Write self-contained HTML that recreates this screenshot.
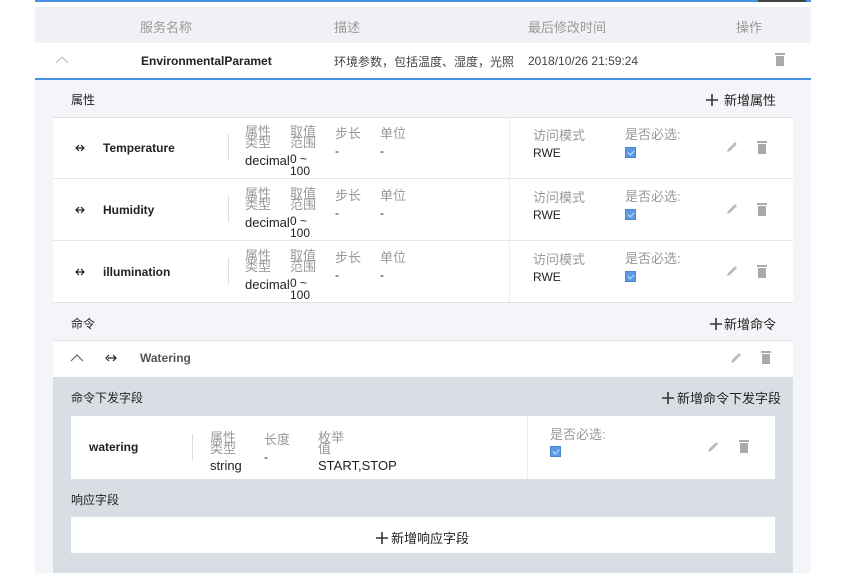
<!DOCTYPE html>
<html><head><meta charset="utf-8"><style>
*{margin:0;padding:0;box-sizing:border-box}
body{width:848px;height:573px;background:#fff;font-family:"Liberation Sans","Noto Sans CJK SC",sans-serif;font-size:12px;color:#222;position:relative;overflow:hidden}
.a{position:absolute}
.g{color:#999;font-size:13px}
.b{font-weight:bold}
.stk{line-height:11px;font-size:13px;color:#999;width:28px}
.trash{width:8px;height:10px;background:#aaa;position:absolute}
.trash:before{content:"";position:absolute;left:-1px;top:-3px;width:10px;height:2px;background:#aaa}
.chk{width:11px;height:11px;background:#5b9be6;border:1px solid #4a86d0;position:absolute}
.chk:after{content:"";position:absolute;left:3px;top:1px;width:3px;height:5px;border:solid #cfe2fa;border-width:0 1px 1px 0;transform:rotate(45deg)}
.add{font-size:13px;display:flex;align-items:center;gap:6px}
</style></head><body>
<div class="a" style="left:35px;top:0;width:776px;height:2px;background:#4a90e2"></div>
<div class="a" style="left:758px;top:0;width:48px;height:2px;background:#444"></div>
<div class="a" style="left:35px;top:7px;width:776px;height:36px;background:#f0f1f4"></div>
<div class="a g" style="left:140px;top:17px">服务名称</div>
<div class="a g" style="left:334px;top:17px">描述</div>
<div class="a g" style="left:528px;top:17px">最后修改时间</div>
<div class="a g" style="left:736px;top:17px">操作</div>
<div class="a" style="left:35px;top:43px;width:776px;height:35px;background:#fff"></div>
<svg class="a" style="left:55px;top:55px" width="14" height="10"><path d="M1 8 L7 2 L13 8" fill="none" stroke="#bbb" stroke-width="1"/></svg>
<div class="a b" style="left:141px;top:54px;font-size:12px">EnvironmentalParamet</div>
<div class="a" style="left:334px;top:53px;color:#444">环境参数，包括温度、湿度，光照</div>
<div class="a" style="left:528px;top:54px;color:#444">2018/10/26 21:59:24</div>
<div class="trash" style="left:776px;top:56px"></div>
<div class="a" style="left:35px;top:78px;width:776px;height:2px;background:#4a90e2"></div>
<div class="a" style="left:35px;top:80px;width:776px;height:493px;background:#f4f5f8"></div>
<div class="a" style="left:71px;top:91px">属性</div>
<div class="a add" style="left:706px;top:90px"><svg width="12" height="12"><path d="M6 0V12M0 6H12" stroke="#333" stroke-width="1.6"/></svg>新增属性</div>

<div class="a" style="left:53px;top:117px;width:740px;height:186px;background:#fff;border-top:1px solid #e2e2e2"></div>
<div class="a" style="left:53px;top:178px;width:740px;height:1px;background:#e6e6e6"></div>
<div class="a" style="left:53px;top:240px;width:740px;height:1px;background:#e6e6e6"></div>
<div class="a" style="left:53px;top:302px;width:740px;height:1px;background:#e2e2e2"></div>
<div class="a" style="left:509px;top:117px;width:1px;height:185px;background:#eee"></div>

<svg class="a" style="left:75px;top:142px" width="12" height="12"><path d="M1 6H9M6 3L9 6L6 9M4 3L1 6L4 9" fill="none" stroke="#222" stroke-width="1.2"/></svg><div class="a b" style="left:103px;top:141px">Temperature</div>
<div class="a" style="left:228px;top:134px;width:1px;height:26px;background:#ddd"></div>
<div class="a stk" style="left:245px;top:126px">属性类型</div><div class="a stk" style="left:290px;top:126px">取值范围</div>
<div class="a g" style="left:335px;top:123px">步长</div><div class="a g" style="left:380px;top:123px">单位</div>
<div class="a" style="left:335px;top:144px">-</div><div class="a" style="left:380px;top:144px">-</div>
<div class="a" style="left:245px;top:153px;font-size:13px">decimal</div><div class="a" style="left:290px;top:153px;font-size:12px;line-height:12px">0 ~<br>100</div>
<div class="a g" style="left:533px;top:125px">访问模式</div><div class="a" style="left:533px;top:146px">RWE</div>
<div class="a g" style="left:625px;top:124px">是否必选:</div><div class="chk" style="left:625px;top:147px"></div>
<svg class="a" style="left:725px;top:140px" width="14" height="14"><path d="M2 12 L3 9 L10 2 L12 4 L5 11 Z" fill="#bbb"/></svg><div class="trash" style="left:758px;top:144px"></div>

<svg class="a" style="left:75px;top:204px" width="12" height="12"><path d="M1 6H9M6 3L9 6L6 9M4 3L1 6L4 9" fill="none" stroke="#222" stroke-width="1.2"/></svg><div class="a b" style="left:103px;top:203px">Humidity</div>
<div class="a" style="left:228px;top:196px;width:1px;height:26px;background:#ddd"></div>
<div class="a stk" style="left:245px;top:188px">属性类型</div><div class="a stk" style="left:290px;top:188px">取值范围</div>
<div class="a g" style="left:335px;top:185px">步长</div><div class="a g" style="left:380px;top:185px">单位</div>
<div class="a" style="left:335px;top:206px">-</div><div class="a" style="left:380px;top:206px">-</div>
<div class="a" style="left:245px;top:215px;font-size:13px">decimal</div><div class="a" style="left:290px;top:215px;line-height:12px">0 ~<br>100</div>
<div class="a g" style="left:533px;top:187px">访问模式</div><div class="a" style="left:533px;top:208px">RWE</div>
<div class="a g" style="left:625px;top:186px">是否必选:</div><div class="chk" style="left:625px;top:209px"></div>
<svg class="a" style="left:725px;top:202px" width="14" height="14"><path d="M2 12 L3 9 L10 2 L12 4 L5 11 Z" fill="#bbb"/></svg><div class="trash" style="left:758px;top:206px"></div>

<svg class="a" style="left:75px;top:266px" width="12" height="12"><path d="M1 6H9M6 3L9 6L6 9M4 3L1 6L4 9" fill="none" stroke="#222" stroke-width="1.2"/></svg><div class="a b" style="left:103px;top:265px">illumination</div>
<div class="a" style="left:228px;top:258px;width:1px;height:26px;background:#ddd"></div>
<div class="a stk" style="left:245px;top:250px">属性类型</div><div class="a stk" style="left:290px;top:250px">取值范围</div>
<div class="a g" style="left:335px;top:247px">步长</div><div class="a g" style="left:380px;top:247px">单位</div>
<div class="a" style="left:335px;top:268px">-</div><div class="a" style="left:380px;top:268px">-</div>
<div class="a" style="left:245px;top:277px;font-size:13px">decimal</div><div class="a" style="left:290px;top:277px;line-height:12px">0 ~<br>100</div>
<div class="a g" style="left:533px;top:249px">访问模式</div><div class="a" style="left:533px;top:270px">RWE</div>
<div class="a g" style="left:625px;top:248px">是否必选:</div><div class="chk" style="left:625px;top:271px"></div>
<svg class="a" style="left:725px;top:264px" width="14" height="14"><path d="M2 12 L3 9 L10 2 L12 4 L5 11 Z" fill="#bbb"/></svg><div class="trash" style="left:758px;top:268px"></div>

<div class="a" style="left:71px;top:315px">命令</div>
<div class="a add" style="left:710px;top:314px;gap:2px"><svg width="12" height="12"><path d="M6 0V12M0 6H12" stroke="#333" stroke-width="1.6"/></svg>新增命令</div>
<div class="a" style="left:53px;top:340px;width:740px;height:37px;background:#fff;border-top:1px solid #e2e2e2"></div>
<svg class="a" style="left:70px;top:353px" width="14" height="10"><path d="M1 8 L7 2 L13 8" fill="none" stroke="#555" stroke-width="1"/></svg>
<svg class="a" style="left:105px;top:352px" width="12" height="12"><path d="M3 6H11M8 3L11 6L8 9M4 3L1 6L4 9" fill="none" stroke="#222" stroke-width="1.2"/></svg>
<div class="a b" style="left:140px;top:351px;color:#555">Watering</div>
<svg class="a" style="left:729px;top:351px" width="14" height="14"><path d="M2 12 L3 9 L10 2 L12 4 L5 11 Z" fill="#bbb"/></svg><div class="trash" style="left:762px;top:354px"></div>
<div class="a" style="left:53px;top:377px;width:740px;height:196px;background:#d9dde4"></div>
<div class="a" style="left:71px;top:389px">命令下发字段</div>
<div class="a add" style="left:662px;top:388px;gap:3px"><svg width="12" height="12"><path d="M6 0V12M0 6H12" stroke="#333" stroke-width="1.6"/></svg>新增命令下发字段</div>
<div class="a" style="left:71px;top:416px;width:704px;height:63px;background:#fff"></div>
<div class="a" style="left:527px;top:416px;width:1px;height:63px;background:#eee"></div>
<div class="a b" style="left:89px;top:440px">watering</div>
<div class="a" style="left:192px;top:434px;width:1px;height:26px;background:#ddd"></div>
<div class="a stk" style="left:210px;top:432px">属性类型</div>
<div class="a g" style="left:264px;top:429px">长度</div><div class="a" style="left:264px;top:450px">-</div>
<div class="a stk" style="left:318px;top:432px">枚举值</div>
<div class="a" style="left:210px;top:458px;font-size:13px">string</div><div class="a" style="left:318px;top:458px;font-size:13px">START,STOP</div>
<div class="a g" style="left:550px;top:424px">是否必选:</div><div class="chk" style="left:550px;top:446px"></div>
<svg class="a" style="left:706px;top:440px" width="14" height="14"><path d="M2 12 L3 9 L10 2 L12 4 L5 11 Z" fill="#bbb"/></svg><div class="trash" style="left:740px;top:443px"></div>
<div class="a" style="left:71px;top:491px">响应字段</div>
<div class="a" style="left:71px;top:517px;width:704px;height:36px;background:#fff"></div>
<div class="a add" style="left:376px;top:528px;gap:3px"><svg width="12" height="12"><path d="M6 0V12M0 6H12" stroke="#333" stroke-width="1.6"/></svg>新增响应字段</div>
</body></html>
